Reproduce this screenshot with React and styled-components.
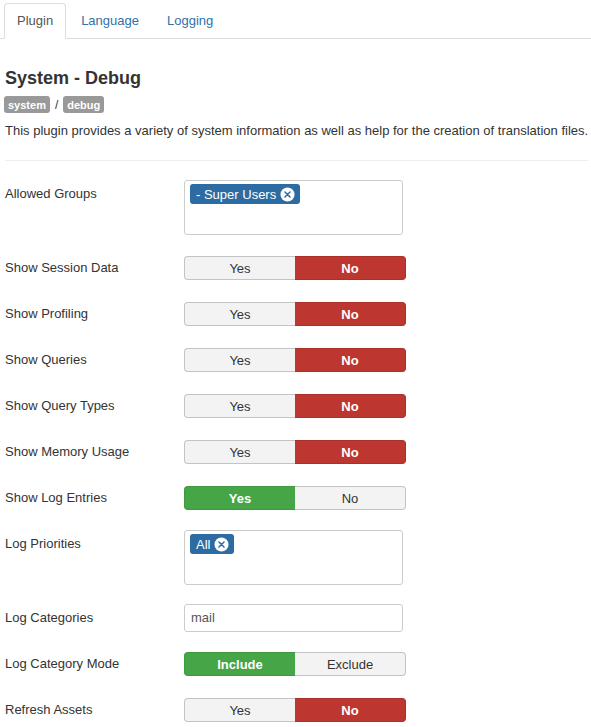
import React from "react";
import styled, { createGlobalStyle } from "styled-components";

const GlobalStyle = createGlobalStyle`
  body {
    margin: 0;
    background: #fff;
    font-family: "Liberation Sans", Arial, sans-serif;
    font-size: 13px;
    color: #333;
  }
`;

const rows = [
  { label: "Allowed Groups", type: "chips", chips: ["- Super Users"], space: 21 },
  { label: "Show Session Data", type: "toggle", value: "no" },
  { label: "Show Profiling", type: "toggle", value: "no" },
  { label: "Show Queries", type: "toggle", value: "no" },
  { label: "Show Query Types", type: "toggle", value: "no" },
  { label: "Show Memory Usage", type: "toggle", value: "no" },
  { label: "Show Log Entries", type: "toggle", value: "yes", space: 20 },
  { label: "Log Priorities", type: "chips", chips: ["All"], space: 19 },
  { label: "Log Categories", type: "text", value: "mail", space: 20 },
  { label: "Log Category Mode", type: "toggle", value: "yes", options: ["Include", "Exclude"] },
  { label: "Refresh Assets", type: "toggle", value: "no" },
];

function CloseIcon() {
  return (
    <svg width="15" height="15" viewBox="0 0 16 16">
      <circle cx="8" cy="8" r="7.5" fill="#fff" />
      <path d="M5.3 5.3 L10.7 10.7 M10.7 5.3 L5.3 10.7" stroke="#2d6ca2" strokeWidth="1.6" strokeLinecap="round" />
    </svg>
  );
}

function Toggle({ value, options = ["Yes", "No"] }) {
  return (
    <ToggleGroup>
      <ToggleButton $active={value === "yes"} $tone="success">{options[0]}</ToggleButton>
      <ToggleButton $active={value === "no"} $tone="danger">{options[1]}</ToggleButton>
    </ToggleGroup>
  );
}

function Control({ row }) {
  if (row.type === "toggle") return <Toggle value={row.value} options={row.options} />;
  if (row.type === "text") return <TextInput>{row.value}</TextInput>;
  return (
    <ChipBox>
      {row.chips.map((c) => (
        <Chip key={c}>
          {c}
          <CloseIcon />
        </Chip>
      ))}
    </ChipBox>
  );
}

export default function App() {
  return (
    <>
      <GlobalStyle />
      <Page>
        <Tabs>
          <Tab $active>Plugin</Tab>
          <Tab>Language</Tab>
          <Tab>Logging</Tab>
        </Tabs>
        <Content>
          <Title>System - Debug</Title>
          <Badges>
            <Badge>system</Badge>
            <Slash>/</Slash>
            <Badge>debug</Badge>
          </Badges>
          <Description>
            This plugin provides a variety of system information as well as help for the creation of translation files.
          </Description>
          <Divider />
          {rows.map((row) => (
            <Row key={row.label} $space={row.space ?? 22}>
              <Label $offset={row.type === "toggle" ? 3 : 5}>{row.label}</Label>
              <Control row={row} />
            </Row>
          ))}
        </Content>
      </Page>
    </>
  );
}

const Page = styled.div`
  width: 591px;
`;

const Tabs = styled.div`
  display: flex;
  gap: 2px;
  padding: 3px 0 0 4px;
  border-bottom: 1px solid #ddd;
`;

const Tab = styled.div`
  height: 34px;
  line-height: 34px;
  padding: 0 12px;
  margin-bottom: -1px;
  font-size: 13px;
  border: 1px solid ${(p) => (p.$active ? "#ddd" : "transparent")};
  border-bottom-color: ${(p) => (p.$active ? "#fff" : "transparent")};
  border-radius: 4px 4px 0 0;
  background: ${(p) => (p.$active ? "#fff" : "transparent")};
  color: ${(p) => (p.$active ? "#555" : "#3071a9")};
`;

const Content = styled.div`
  padding: 0 3px 0 5px;
`;

const Title = styled.h2`
  margin: 28px 0 0;
  font-size: 18px;
  line-height: 22px;
  font-weight: bold;
  color: #333;
`;

const Badges = styled.div`
  display: flex;
  align-items: center;
  gap: 5px;
  margin: 7px 0 0 -1px;
`;

const Badge = styled.span`
  background: #999;
  color: #fff;
  font-size: 11px;
  font-weight: bold;
  line-height: 14px;
  padding: 2px 4px 1px;
  border-radius: 3px;
`;

const Slash = styled.span`
  font-size: 12px;
  color: #333;
`;

const Description = styled.p`
  margin: 9px 0 0;
  line-height: 18px;
  font-size: 13px;
  white-space: nowrap;
`;

const Divider = styled.hr`
  margin: 20px 0 19px;
  border: 0;
  border-top: 1px solid #eee;
`;

const Row = styled.div`
  display: flex;
  align-items: flex-start;
  margin-bottom: ${(p) => p.$space}px;
`;

const Label = styled.div`
  width: 179px;
  flex: none;
  padding-top: ${(p) => p.$offset}px;
  line-height: 18px;
  font-size: 13px;
  color: #333;
`;

const ToggleGroup = styled.div`
  display: flex;
  width: 222px;
  height: 24px;
`;

const ToggleButton = styled.div`
  flex: 1;
  display: flex;
  align-items: center;
  justify-content: center;
  font-size: 13px;
  box-sizing: border-box;
  border: 1px solid
    ${(p) => (!p.$active ? "#c4c4c4" : p.$tone === "success" ? "#3f9a3f" : "#ab302a")};
  background: ${(p) => (!p.$active ? "#f3f3f3" : p.$tone === "success" ? "#46a546" : "#bd362f")};
  color: ${(p) => (p.$active ? "#fff" : "#333")};
  font-weight: ${(p) => (p.$active ? "bold" : "normal")};
  &:first-child {
    border-radius: 4px 0 0 4px;
    border-right: 0;
  }
  &:last-child {
    border-radius: 0 4px 4px 0;
    border-left: 0;
  }
`;

const ChipBox = styled.div`
  box-sizing: border-box;
  width: 219px;
  height: 55px;
  border: 1px solid #ccc;
  border-radius: 3px;
  padding: 3px 5px;
  display: flex;
  align-items: flex-start;
  gap: 4px;
`;

const Chip = styled.span`
  display: inline-flex;
  align-items: center;
  gap: 4px;
  height: 20px;
  padding: 0 5px 0 6px;
  background: #2d6ca2;
  color: #fff;
  font-size: 13px;
  border-radius: 3px;
`;

const TextInput = styled.div`
  box-sizing: border-box;
  width: 219px;
  height: 28px;
  border: 1px solid #ccc;
  border-radius: 3px;
  padding: 0 6px;
  line-height: 26px;
  font-size: 13px;
  color: #555;
`;
